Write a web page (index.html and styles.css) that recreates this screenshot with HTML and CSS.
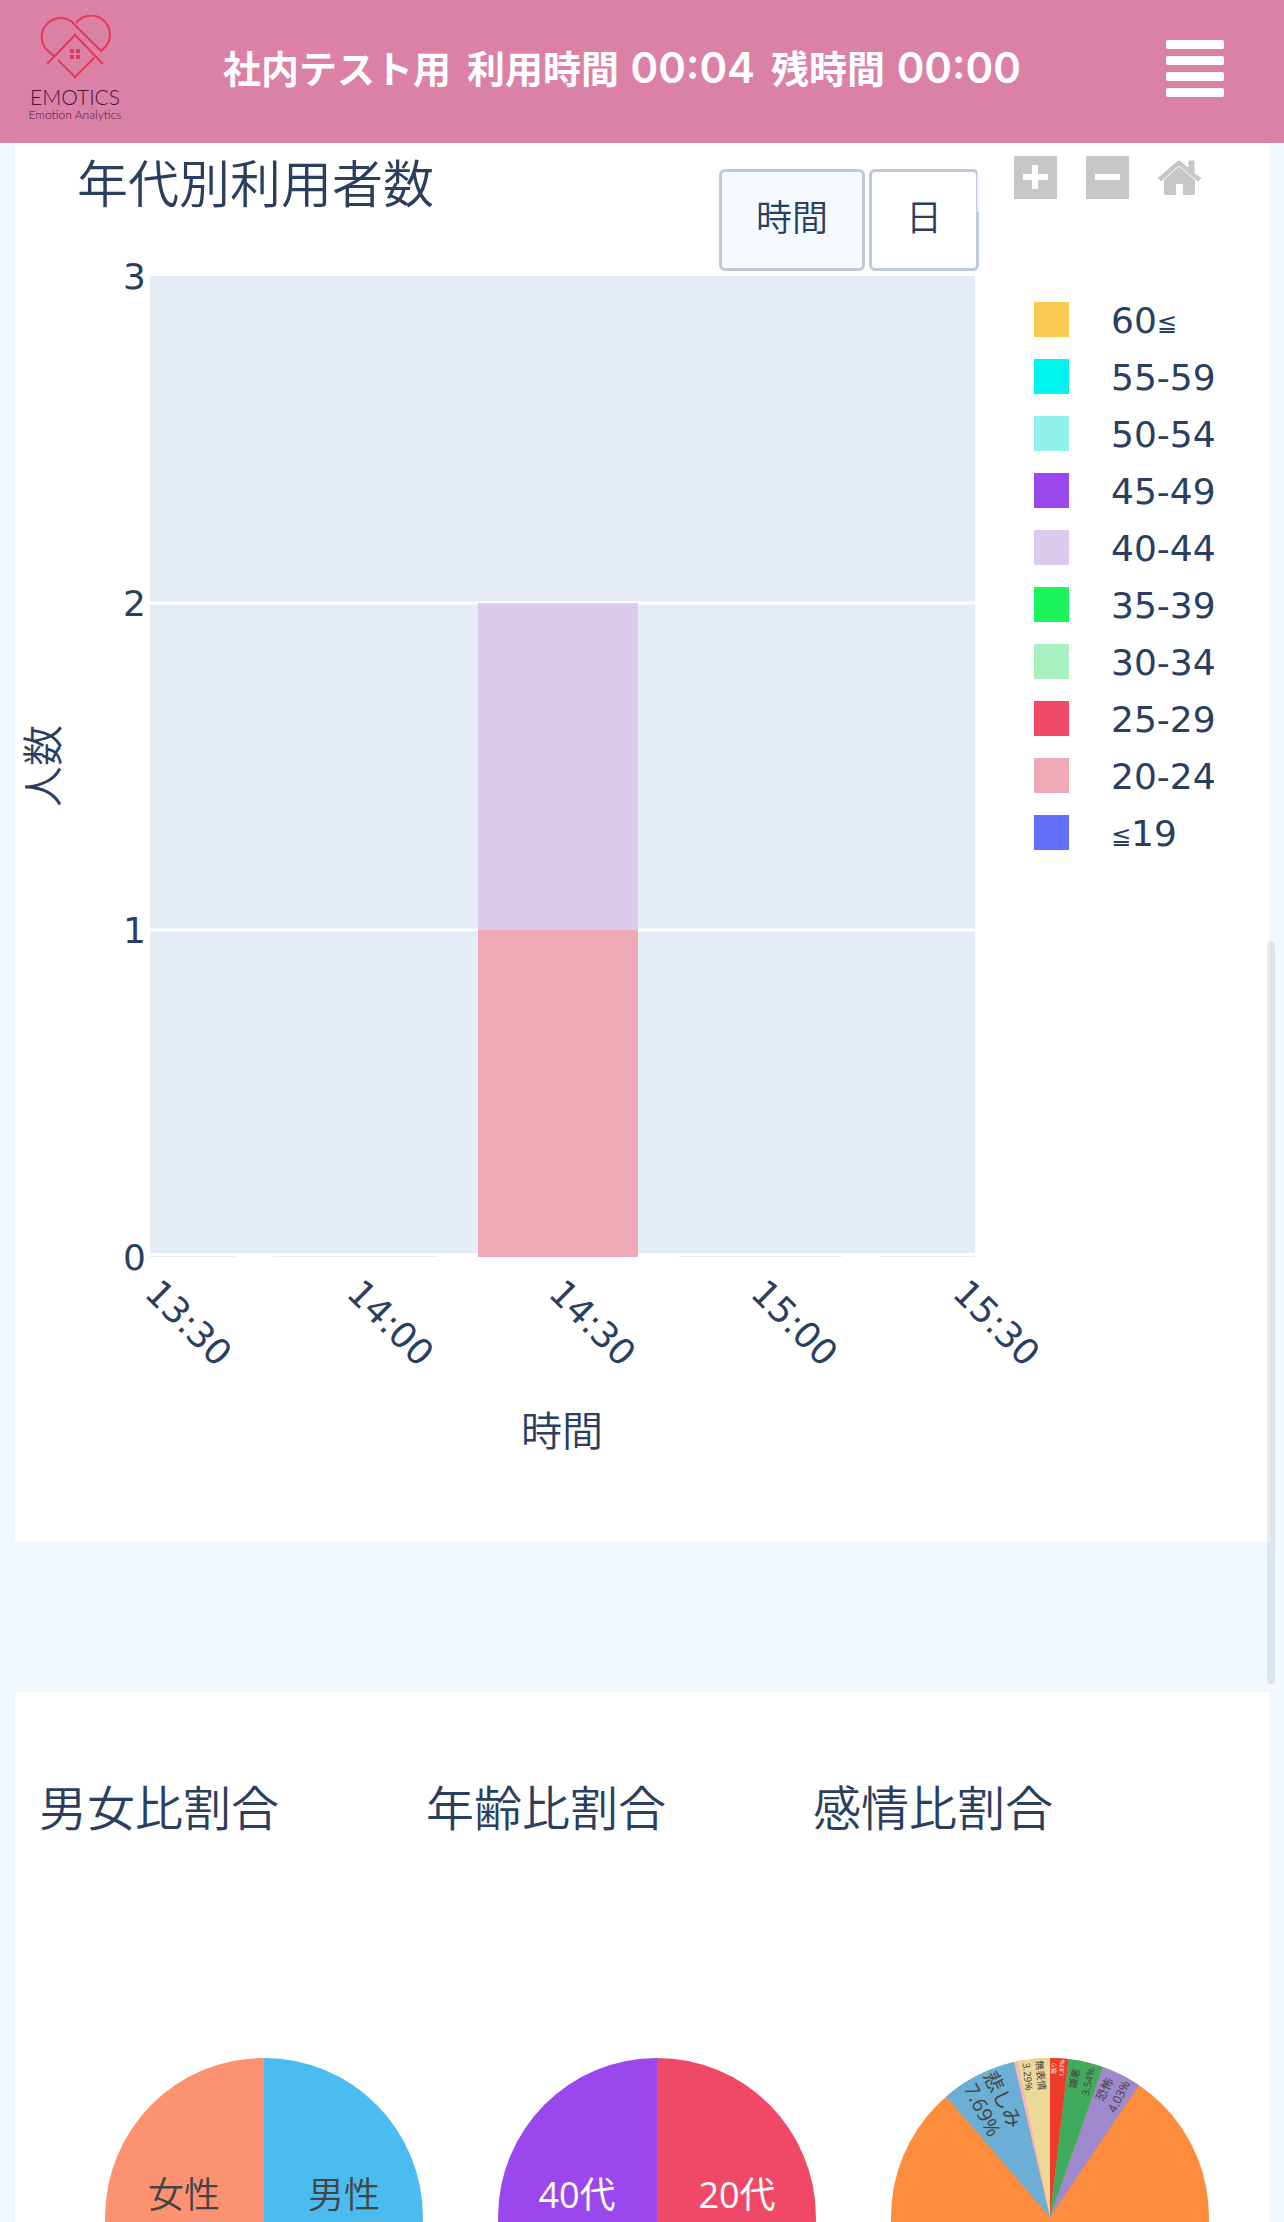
FILE: index.html
```html
<!DOCTYPE html>
<html lang="ja">
<head>
    <meta charset="UTF-8">
    <meta name="viewport" content="width=device-width, initial-scale=1.0">
    <title>EMOTICS</title>
    <link rel="stylesheet" href="styles.css">
</head>
<body>
    <header class="header">
        <a class="logo" href="#" aria-label="EMOTICS">
            <svg class="logo-mark" viewBox="0 0 72 64" aria-hidden="true">
                <path d="M15 41 L7 34 A19 19 0 0 1 32 6 L62 36 L67 31 A18.5 18.5 0 0 0 37 8"/>
                <path d="M8 49 L36 20 L64 49"/>
                <path d="M19 45 L36 62 L55 43"/>
                <path class="logo-window" d="M31 34h4v4h-4zM37 34h4v4h-4zM31 40h4v4h-4zM37 40h4v4h-4z"/>
            </svg>
            <span class="logo-name">EMOTICS</span>
            <span class="logo-sub">Emotion Analytics</span>
        </a>
        <p class="usage">
            <span>社内テスト用</span>
            <span>利用時間 <b>00:04</b></span>
            <span>残時間 <b>00:00</b></span>
        </p>
        <button class="menu" type="button" aria-label="メニュー">
            <i></i><i></i><i></i><i></i>
        </button>
    </header>

    <main class="main">
        <section class="card">
            <div class="chart-head">
                <h2>年代別利用者数</h2>
                <div class="range">
                    <button class="range-btn active" type="button">時間</button>
                    <button class="range-btn" type="button">日</button>
                </div>
                <div class="modebar">
                    <button type="button" aria-label="拡大">
                        <svg viewBox="0 0 43 43"><path fill-rule="evenodd" d="M0 0h43v43H0zM18 9v9H9v6h9v9h6v-9h10v-6H24V9z"/></svg>
                    </button>
                    <button type="button" aria-label="縮小">
                        <svg viewBox="0 0 43 43"><path fill-rule="evenodd" d="M0 0h43v43H0zM9 18v6h25v-6z"/></svg>
                    </button>
                    <button type="button" aria-label="リセット">
                        <svg viewBox="0 0 43 43"><path d="M21 9 L37 22 V37 q0 2 -2 2 H25 V28 H18 V39 H8 q-2 0 -2 -2 V22z"/><path d="M21 4 q1 0 2 1 L30 11 V4 h7 v13 L44 22 L40 26 L21 10 L3 26 L-1 22 L19 5 q1 -1 2 -1z" stroke="#fff" stroke-width="1"/></svg>
                    </button>
                </div>
            </div>
            <div class="chart-body">
                <svg class="bar-chart" viewBox="0 0 983 1271" role="img" aria-label="年代別利用者数">
                    <rect x="135" y="5" width="825" height="981" fill="#e5ecf6"/>
                    <path d="M135 332H960M135 659H960" stroke="#fff" stroke-width="3"/>
                    <rect x="135" y="982" width="825" height="3" fill="#fff"/>
                    <path d="M220 985H258M423 985H463M623 985H664M827 985H865" stroke="#fff" stroke-width="3"/>
                    <rect x="463" y="332" width="160" height="327" fill="#dccbed"/>
                    <rect x="463" y="659" width="160" height="327" fill="#f0a7b6"/>
                    <g class="tick" text-anchor="end">
                        <text x="131" y="18">3</text>
                        <text x="131" y="345">2</text>
                        <text x="131" y="672">1</text>
                        <text x="131" y="999">0</text>
                    </g>
                    <g class="tick">
                        <text transform="translate(128 1024) rotate(45)">13:30</text>
                        <text transform="translate(330 1024) rotate(45)">14:00</text>
                        <text transform="translate(532 1024) rotate(45)">14:30</text>
                        <text transform="translate(734 1024) rotate(45)">15:00</text>
                        <text transform="translate(936 1024) rotate(45)">15:30</text>
                    </g>
                    <g class="axis-title" text-anchor="middle">
                        <text x="547" y="1175">時間</text>
                        <text transform="translate(43 495) rotate(-90)">人数</text>
                    </g>
                </svg>
                <ul class="legend">
                    <li><i class="age-60"></i><span>60<small>≦</small></span></li>
                    <li><i class="age-55"></i><span>55-59</span></li>
                    <li><i class="age-50"></i><span>50-54</span></li>
                    <li><i class="age-45"></i><span>45-49</span></li>
                    <li><i class="age-40"></i><span>40-44</span></li>
                    <li><i class="age-35"></i><span>35-39</span></li>
                    <li><i class="age-30"></i><span>30-34</span></li>
                    <li><i class="age-25"></i><span>25-29</span></li>
                    <li><i class="age-20"></i><span>20-24</span></li>
                    <li><i class="age-19"></i><span><small>≦</small>19</span></li>
                </ul>
            </div>
        </section>

        <section class="card">
            <div class="ratio-titles">
                <h2>男女比割合</h2>
                <h2>年齢比割合</h2>
                <h2>感情比割合</h2>
            </div>
            <div class="ratio-charts">
                <svg class="pie" viewBox="-197 -197 393 393" role="img" aria-label="男女比割合">
                    <path d="M0 0V-159A159 159 0 0 1 0 159z" fill="#4abcef"/>
                    <path d="M0 0V159A159 159 0 0 1 0 -159z" fill="#fc9272"/>
                    <text x="-80" y="-9">女性</text>
                    <text x="80" y="-9">男性</text>
                </svg>
                <svg class="pie" viewBox="-197 -197 393 393" role="img" aria-label="年齢比割合">
                    <path d="M0 0V-159A159 159 0 0 1 0 159z" fill="#f04967"/>
                    <path d="M0 0V159A159 159 0 0 1 0 -159z" fill="#9a48ed"/>
                    <g class="light">
                        <text x="-80" y="-9">40代</text>
                        <text x="80" y="-9">20代</text>
                    </g>
                </svg>
                <svg class="pie" viewBox="-197 -197 393 393" role="img" aria-label="感情比割合">
                    <circle r="159" fill="#fd8d3c"/>
                    <path d="M0 0L-103.8 -120.5A159 159 0 0 1 -36 -154.9z" fill="#6baed6"/>
                    <path d="M0 0L-36 -154.9A159 159 0 0 1 -32.6 -155.6z" fill="#fbb4c4"/>
                    <path d="M0 0L-32.6 -155.6A159 159 0 0 1 0 -159z" fill="#ecd99a"/>
                    <path d="M0 0V-159A159 159 0 0 1 18.6 -157.9z" fill="#ef3b2c"/>
                    <path d="M0 0L18.6 -157.9A159 159 0 0 1 53 -149.9z" fill="#41ab5d"/>
                    <path d="M0 0L53 -149.9A159 159 0 0 1 88.9 -131.8z" fill="#9e89cc"/>
                    <g class="size-20" transform="translate(-58 -112) rotate(63)">
                        <text y="-5">悲しみ</text>
                        <text y="18">7.69%</text>
                    </g>
                    <g class="size-10" transform="translate(-16 -141) rotate(84)">
                        <text y="-3">無表情</text>
                        <text y="10">3.29%</text>
                    </g>
                    <g class="size-6 light" transform="translate(8 -149) rotate(-87)">
                        <text y="-2">怒り</text>
                        <text y="6">1.87%</text>
                    </g>
                    <g class="size-10" transform="translate(31 -137) rotate(-77)">
                        <text y="-3">嫌悪</text>
                        <text y="11">3.54%</text>
                    </g>
                    <g class="size-12" transform="translate(62 -124) rotate(-63)">
                        <text y="-4">恐怖</text>
                        <text y="12">4.03%</text>
                    </g>
                </svg>
            </div>
        </section>
        <div class="scroll-thumb"></div>
    </main>
</body>
</html>
```
FILE: styles.css
```css
* {
    box-sizing: border-box;
}
body {
    display: flex;
    flex-direction: column;
    height: 100vh;
    margin: 0;
    overflow: hidden;
    background: #f0f7ff;
    color: #2a3f5f;
    font-family: "DejaVu Sans", "Noto Sans CJK JP", sans-serif;
}
h2, p, ul {
    margin: 0;
    padding: 0;
}
button {
    padding: 0;
    border: none;
    background: none;
    font-family: inherit;
    color: inherit;
    cursor: pointer;
}

/* header */
.header {
    display: flex;
    flex-shrink: 0;
    align-items: center;
    height: 143px;
    padding: 0 60px 7px 25px;
    background: #db81a6;
}
.logo {
    display: flex;
    flex-direction: column;
    align-items: center;
    width: 100px;
    padding-top: 2px;
    color: #4b1438;
    font-family: Lato, sans-serif;
    font-weight: 300;
    text-decoration: none;
}
.logo-mark {
    width: 72px;
    height: 64px;
    margin-bottom: 8px;
    fill: none;
    stroke: #e0395a;
    stroke-width: 2;
}
.logo-mark .logo-window {
    fill: #e0395a;
    stroke: none;
}
.logo-name {
    font-size: 21px;
    line-height: 20px;
}
.logo-sub {
    font-size: 12px;
    line-height: 16px;
    white-space: nowrap;
}
.usage {
    display: flex;
    gap: 16px;
    margin-left: 98px;
    padding-bottom: 4px;
    color: #fff;
    font-family: Inter, "Noto Sans CJK JP", sans-serif;
    font-size: 38px;
    font-weight: 600;
    white-space: nowrap;
}
.usage b {
    margin-left: 2px;
    font-size: 42px;
    font-weight: 600;
    line-height: 38px;
}
.menu {
    display: flex;
    flex-direction: column;
    gap: 7px;
    width: 58px;
    margin-left: auto;
}
.menu i {
    height: 9px;
    border-radius: 2px;
    background: #fff;
}

/* cards */
.main {
    position: relative;
    flex: 1;
    min-height: 0;
    overflow: hidden;
}
.card {
    margin: 0 14px 150px 15px;
    background: #fff;
}
h2 {
    font-size: 48px;
    font-weight: 350;
    line-height: 60px;
    white-space: nowrap;
}

/* bar chart */
.chart-head {
    display: flex;
    align-items: flex-start;
    padding: 13px 69px 0 62px;
}
.chart-head h2 {
    font-size: 51px;
}
.range {
    display: flex;
    gap: 4px;
    margin: 13px 35px 0 auto;
}
.range-btn {
    position: relative;
    height: 102px;
    padding: 0 34px 10px;
    border: 3px solid #bec8d9;
    border-radius: 6px;
    background: #fff;
    font-size: 36px;
    font-weight: 350;
}
.range-btn.active {
    background: #f4faff;
}
.range-btn:last-child::after {
    content: "";
    position: absolute;
    top: 0;
    right: -3px;
    width: 2px;
    height: 40px;
    background: rgba(255, 255, 255, 0.7);
}
.modebar {
    display: flex;
    gap: 29px;
}
.modebar button {
    width: 43px;
    height: 43px;
}
.modebar svg {
    display: block;
    overflow: visible;
    fill: #c6c6c6;
}
.chart-body {
    display: grid;
    grid-template-columns: 1fr 272px;
}
.bar-chart {
    display: block;
    width: 100%;
    overflow: visible;
    fill: #2a3f5f;
}
.tick {
    font-size: 36px;
}
.axis-title {
    font-size: 41px;
    font-weight: 350;
}
.legend {
    padding: 20px 0 0 36px;
    list-style: none;
    font-size: 36px;
}
.legend li {
    display: flex;
    align-items: center;
    gap: 42px;
    height: 57px;
}
.legend i {
    width: 35px;
    height: 35px;
}
.legend span {
    padding-top: 2px;
}
.legend small {
    font-size: 24px;
    line-height: 24px;
    vertical-align: 2px;
}
.age-60 { background: #fecb52; }
.age-55 { background: #00f5ee; }
.age-50 { background: #93f1ec; }
.age-45 { background: #9a48ed; }
.age-40 { background: #dccbed; }
.age-35 { background: #19f55b; }
.age-30 { background: #a8f0c0; }
.age-25 { background: #f04967; }
.age-20 { background: #f0a7b6; }
.age-19 { background: #636efa; }

/* pie charts */
.ratio-titles {
    display: grid;
    grid-template-columns: repeat(3, 1fr);
    padding: 87px 70px 181px 24px;
}
.ratio-charts {
    display: grid;
    grid-template-columns: repeat(3, 1fr);
    padding: 0 24px 0 52px;
}
.pie {
    display: block;
    width: 100%;
    fill: #444;
    font-family: "Open Sans", "Noto Sans CJK JP", sans-serif;
    font-size: 36px;
    font-weight: 350;
    text-anchor: middle;
}
.pie g {
    font-weight: 400;
}
.light {
    fill: #fff;
}
.size-20 {
    font-size: 20px;
}
.size-12 {
    font-size: 12px;
}
.size-10 {
    font-size: 10px;
}
.size-6 {
    font-size: 6px;
}

.scroll-thumb {
    position: absolute;
    top: 38.4%;
    right: 9px;
    width: 8px;
    height: 35.7%;
    border-radius: 4px;
    background: rgba(0, 0, 0, 0.08);
}
```
